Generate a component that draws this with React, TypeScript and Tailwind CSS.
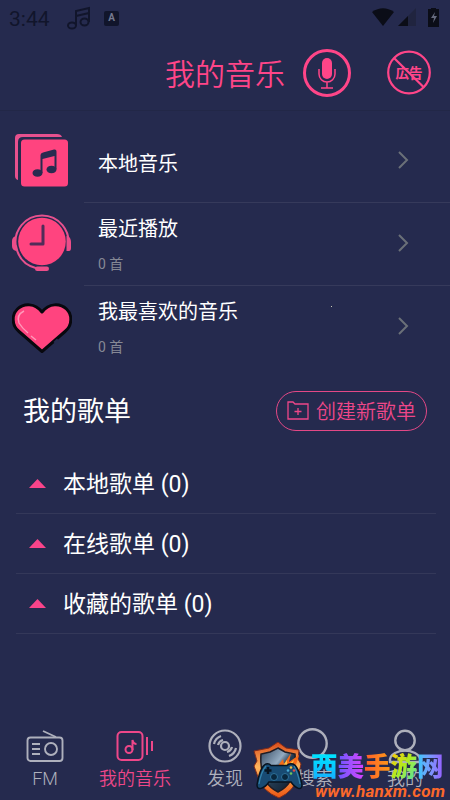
import type { ReactNode } from "react";
import clsx from "clsx";

// ----------------------------------------------------------------------------

const App = () => {
  return (
    <div className="relative flex h-[800px] w-[450px] flex-col overflow-hidden bg-[#252a4e] font-['Roboto','Noto_Sans_CJK_SC',sans-serif] text-white">
      <StatusBar />
      <Header />

      <div className="mt-[9px] flex flex-col">
        <MusicRow title="本地音乐" icon={<LocalIcon />} />
        <MusicRow title="最近播放" count="0 首" icon={<RecentIcon />} />
        <MusicRow title="我最喜欢的音乐" count="0 首" icon={<HeartIcon />} dot last />
      </div>

      <div className="flex h-[85px] items-center justify-between pb-[2px] pl-[23px] pr-[23px]">
        <h2 className="pt-[2px] text-[27px] leading-8">我的歌单</h2>
        <button className="flex h-10 w-[151px] items-center justify-center gap-[7px] rounded-full border border-[#e34886] text-[20px] font-[350] leading-6 text-[#ee4789]">
          <FolderIcon />
          <span className="pt-[2px]">创建新歌单</span>
        </button>
      </div>

      <div className="flex flex-col pl-4 pr-[14px]">
        <PlaylistRow text="本地歌单 (0)" />
        <PlaylistRow text="在线歌单 (0)" />
        <PlaylistRow text="收藏的歌单 (0)" />
      </div>

      <div className="mt-auto grid h-[75px] grid-cols-5">
        <Tab text="FM" icon={<RadioIcon />} />
        <Tab text="我的音乐" icon={<AlbumIcon />} active />
        <Tab text="发现" icon={<DiscIcon />} />
        <Tab text="搜索" icon={<SearchIcon />} />
        <Tab text="我的" icon={<UserIcon />} />
      </div>

      <Watermark />
    </div>
  );
};

export default App;

const StatusBar = () => {
  return (
    <div className="flex h-9 shrink-0 items-center pl-[9px] pr-[10px] text-[#11152b]">
      <span className="w-[58px] pt-[2px] text-[21px] leading-6">3:44</span>
      <svg width="24" height="24" viewBox="0 0 24 24" fill="none" stroke="currentColor" strokeWidth="2">
        <ellipse cx="5" cy="19.500" rx="4" ry="3" />
        <ellipse cx="17.500" cy="16" rx="4" ry="3.500" />
        <path d="M9 19V5l13-3v14M9 10l13-3" />
      </svg>
      <span className="ml-[13px] flex h-[15px] w-[15px] items-center justify-center rounded-[2px] bg-[#11152b] text-[10px] font-bold leading-none text-[#757990]">
        A
      </span>
      <svg className="ml-auto" width="68" height="20" viewBox="0 0 68 20">
        <path d="M0 4Q11-3.500 22 4L11 18Z" fill="#0b0d17" />
        <path d="M26 18L44 0V18Z" fill="#20243f" />
        <path d="M26 18L36 8V18Z" fill="#0b0d17" />
        <path d="M56 1h3V0h5v1h3v18H56Z" fill="#0b0d17" />
        <path d="M63 4l-4 6h3l-1 5 4-7h-3Z" fill="#656a7e" />
      </svg>
    </div>
  );
};

const Header = () => {
  return (
    <div className="flex h-[75px] shrink-0 items-center border-b border-[#222747] pl-[165px] pr-[18px] text-[#ff4588]">
      <h1 className="w-[137px] pt-[3px] text-[30px] font-[350] leading-9">我的音乐</h1>
      <svg width="50" height="50" viewBox="0 0 50 50" fill="none" stroke="currentColor">
        <circle cx="25" cy="25" r="22.500" strokeWidth="3" />
        <rect x="20" y="10" width="10" height="21" rx="5" fill="currentColor" stroke="none" />
        <path d="M17 21v5a8 8 0 0 0 16 0v-5M25 34v6M19 40h12" strokeWidth="1.500" />
      </svg>
      <svg className="ml-auto" width="46" height="46" viewBox="0 0 46 46" fill="none" stroke="currentColor">
        <circle cx="23" cy="22.500" r="20.800" strokeWidth="2.200" />
        <text
          x="23"
          y="28"
          textAnchor="middle"
          fontSize="13.500"
          fontWeight="700"
          fontFamily="Noto Sans CJK JP, sans-serif"
          fill="currentColor"
          stroke="none"
        >
          広告
        </text>
        <path d="M8 8L38 37.500" strokeWidth="2.200" />
      </svg>
    </div>
  );
};

const MusicRow = ({
  title,
  count,
  icon,
  dot,
  last,
}: {
  title: string;
  count?: string;
  icon: ReactNode;
  dot?: boolean;
  last?: boolean;
}) => {
  return (
    <div className="flex h-[83px]">
      <div className="flex w-[84px] items-center justify-center pb-px">{icon}</div>
      <div
        className={clsx(
          "relative flex flex-1 items-center justify-between border-b pl-[14px] pr-[41px]",
          last ? "border-transparent" : "border-[#363a5b]"
        )}
      >
        <div className={clsx("flex flex-col gap-[13px]", count ? "pt-[2px]" : "pt-[5px]")}>
          <p className="text-[20px] leading-6">{title}</p>
          {count && <p className="text-[14px] leading-5 text-[#858895]">{count}</p>}
        </div>
        {dot && <i className="absolute left-[247px] top-[20px] h-px w-px bg-[#c8c9b5]" />}
        <svg className="mb-[2px]" width="12" height="20" viewBox="0 0 12 20" fill="none" stroke="#6b7078" strokeWidth="2">
          <path d="M2 2l8 8-8 8" />
        </svg>
      </div>
    </div>
  );
};

const PlaylistRow = ({ text }: { text: string }) => {
  return (
    <div className="flex h-[60px] items-center border-b border-[#343859] pl-[13px]">
      <svg className="mb-px" width="17" height="9" viewBox="0 0 17 9" fill="#f9448a">
        <path d="M8.500 0L17 9H0Z" />
      </svg>
      <p className="ml-[17px] pt-[2px] text-[23px] leading-7">{text}</p>
    </div>
  );
};

const Tab = ({
  text,
  icon,
  active,
}: {
  text: string;
  icon: ReactNode;
  active?: boolean;
}) => {
  return (
    <div
      className={clsx(
        "flex flex-col items-center text-[18px] font-[350] leading-6",
        active ? "text-[#ee4789]" : "text-[#aeb0bc]"
      )}
    >
      {icon}
      <span className="pt-px">{text}</span>
    </div>
  );
};

// ----------------------------------------------------------------------------

const LocalIcon = () => (
  <svg width="60" height="60" viewBox="0 0 60 60">
    <path d="M6 49Q3 48 3 45V7Q3 3 7 3H45Q49 3 50 6H11Q6 6 6 11Z" fill="#e7518e" />
    <rect x="9" y="8.500" width="47" height="47" rx="3.500" fill="#ff447f" />
    <g fill="#292b50">
      <ellipse cx="25.500" cy="42" rx="5" ry="3.800" />
      <ellipse cx="39.500" cy="38.500" rx="5" ry="3.800" />
      <path d="M28.500 24Q28.500 22 31 21.500l11-3q2.500-.5 2.500 2V38h-2V25l-12 3v14h-2Z" />
    </g>
  </svg>
);

const RecentIcon = () => (
  <svg width="60" height="60" viewBox="0 0 60 60" fill="none">
    <path d="M4 33A26.500 26.500 0 1 1 56 33M4 32Q7 50 25 54.500H32" stroke="#e7518e" strokeWidth="2" />
    <circle cx="30" cy="27.500" r="23.800" fill="#ff447f" />
    <path d="M4 22v15Q0 36 0 32v-5Q0 23 4 22ZM54.500 22v15h2.500q2 0 2-3v-6q0-4-3-6Z" fill="#ed4d89" />
    <path d="M31 12v18H19" stroke="#512c59" strokeWidth="3" strokeLinecap="round" strokeLinejoin="round" />
    <rect x="23" y="52.500" width="14" height="4.500" rx="2.200" fill="#ed4d89" />
  </svg>
);

const HeartIcon = () => (
  <svg width="60" height="54" viewBox="0 0 60 54" fill="none">
    <path
      d="M30 51.500L7 31.500C-1 25 0 14 5.500 9C12 3 23 3 30 12C37 3 48 3 54.500 9C60 14 61 25 53 31.500Z"
      fill="#ff447f"
      stroke="#08080e"
      strokeWidth="3"
      strokeLinejoin="round"
    />
    <path d="M12 11Q4 15 7 23q3 5 9 10M19 36l5 4" stroke="#ff9aba" strokeWidth="1.400" />
    <path d="M42.500 43l3.500-3.300" stroke="#252a4e" strokeWidth="3" />
  </svg>
);

const FolderIcon = () => (
  <svg width="22" height="20" viewBox="0 0 22 20" fill="none" stroke="currentColor" strokeWidth="1.300">
    <path d="M1 1h5l2 2h13v15H1ZM11 7v7M7.500 10.500h7" />
  </svg>
);

const RadioIcon = () => (
  <svg className="h-[41px] shrink-0" width="38" height="41" viewBox="0 0 38 41" fill="none" stroke="currentColor" strokeWidth="1.900">
    <rect x="1.500" y="12.500" width="35" height="23.500" rx="3" />
    <path d="M17 6l13 6M6 19h8M6 24h8M6 29h8" />
    <circle cx="25" cy="24" r="6" />
  </svg>
);

const AlbumIcon = () => (
  <svg className="h-[41px] shrink-0" width="38" height="41" viewBox="0 0 38 41" fill="none" stroke="currentColor" strokeWidth="2">
    <rect x="1.500" y="7" width="25" height="28" rx="4" />
    <circle cx="13" cy="24.500" r="3.500" />
    <path d="M16.500 25V15q1 4 4 4M31 12v18M36 16v10" />
  </svg>
);

const DiscIcon = () => (
  <svg className="h-[41px] shrink-0" width="36" height="41" viewBox="0 0 36 41" fill="none" stroke="currentColor" strokeWidth="2.200">
    <circle cx="18" cy="21" r="15.500" />
    <circle cx="18" cy="21" r="4" />
    <path d="M7 19a11 11 0 0 1 7-8M11 20a7 7 0 0 1 5-5M29 23a11 11 0 0 1-7 8M25 22a7 7 0 0 1-5 5" />
  </svg>
);

const SearchIcon = () => (
  <svg className="h-[41px] shrink-0" width="36" height="41" viewBox="0 0 36 41" fill="none" stroke="currentColor" strokeWidth="2.400">
    <circle cx="15.500" cy="18.500" r="14.200" />
    <path d="M26 29l7 7" />
  </svg>
);

const UserIcon = () => (
  <svg className="h-[41px] shrink-0" width="36" height="41" viewBox="0 0 36 41" fill="none" stroke="currentColor" strokeWidth="2.400">
    <circle cx="18" cy="15.500" r="9.700" />
    <path d="M3 37Q2 31 8 28q10-5 20 0 6 3 5 9Z" />
  </svg>
);

const Watermark = () => (
  <div className="absolute bottom-0 left-[253px] flex h-[58px] w-[197px]">
    <svg className="shrink-0" width="50" height="58" viewBox="0 0 50 58">
      <defs>
        <linearGradient id="fire" x2="0" y2="1">
          <stop stopColor="#d94a19" />
          <stop offset=".45" stopColor="#ffb65e" />
          <stop offset="1" stopColor="#eb5613" />
        </linearGradient>
        <linearGradient id="steel" x2="1" y2="1">
          <stop stopColor="#31455d" />
          <stop offset=".4" stopColor="#93abc1" />
          <stop offset=".55" stopColor="#233a50" />
          <stop offset="1" stopColor="#0b1929" />
        </linearGradient>
      </defs>
      <path
        d="M25 0L33 6 46 8 45 17 48 22 45 35Q41 49 26 56Q9 49 5 35L1 24 4 19 1 9 16 6Z"
        fill="url(#fire)"
        stroke="#842c19"
      />
      <path d="M25 6L32 10 42 12Q44 41 25 50Q6 41 8 12L17 10Z" fill="url(#steel)" stroke="#201d25" strokeWidth="1.500" />
      <path d="M24 25l6-8 1 5 7-11-2 9 10-7-4 13 5 2-5 6H22Z" fill="#f66a18" />
      <path d="M29 25l5-7v6l7-6-4 10H28Z" fill="#ffc443" />
      <path
        d="M13 22q3-1 5 1.500h16q2-2.500 6-1.500c5 2 8 15 9 21 0 6-6 4-11-3H16C11 47 4 49 4 43c1-6 4-19 9-21Z"
        fill="#184b73"
        stroke="#07131f"
        strokeWidth="1.500"
      />
      <path d="M13 24Q8 30 6 42M41 24q4 7 6 18" stroke="#3383ac" strokeWidth="1.200" fill="none" />
      <path d="M15 25v7M11.500 28.500h7" stroke="#07131f" strokeWidth="2.500" />
      <circle cx="21" cy="35" r="3.500" fill="#09283f" stroke="#2d719a" />
      <circle cx="32" cy="35" r="3.500" fill="#09283f" stroke="#2d719a" />
      <circle cx="38" cy="25.500" r="1.300" fill="#f0bd49" />
      <circle cx="41" cy="28.500" r="1.300" fill="#e14b42" />
      <circle cx="35" cy="28.500" r="1.300" fill="#47aad4" />
      <circle cx="38" cy="31.500" r="1.300" fill="#72c55c" />
    </svg>
    <div className="ml-[8px] flex flex-col whitespace-nowrap">
      <p className="mt-[9px] flex text-[26.500px] font-black leading-[32px]">
        <span className="bg-linear-to-b from-[#00eaff] to-[#18a8ff] bg-clip-text text-transparent">西</span>
        <span className="bg-linear-to-r from-[#6954ff] to-[#d73eff] bg-clip-text text-transparent">美</span>
        <span className="bg-linear-to-r from-[#ff5a29] to-[#ff9b13] bg-clip-text text-transparent">手</span>
        <span className="bg-linear-to-br from-[#ffc400] via-[#a8ed20] to-[#10dfa0] bg-clip-text text-transparent">游</span>
        <span className="bg-linear-to-r from-[#14cafa] to-[#9757ff] bg-clip-text text-transparent">网</span>
      </p>
      <p className="ml-[4px] text-[17px] font-bold italic leading-[17px] tracking-[0.25px] text-[#fb682b]">
        www.hanxm.com
      </p>
    </div>
  </div>
);
